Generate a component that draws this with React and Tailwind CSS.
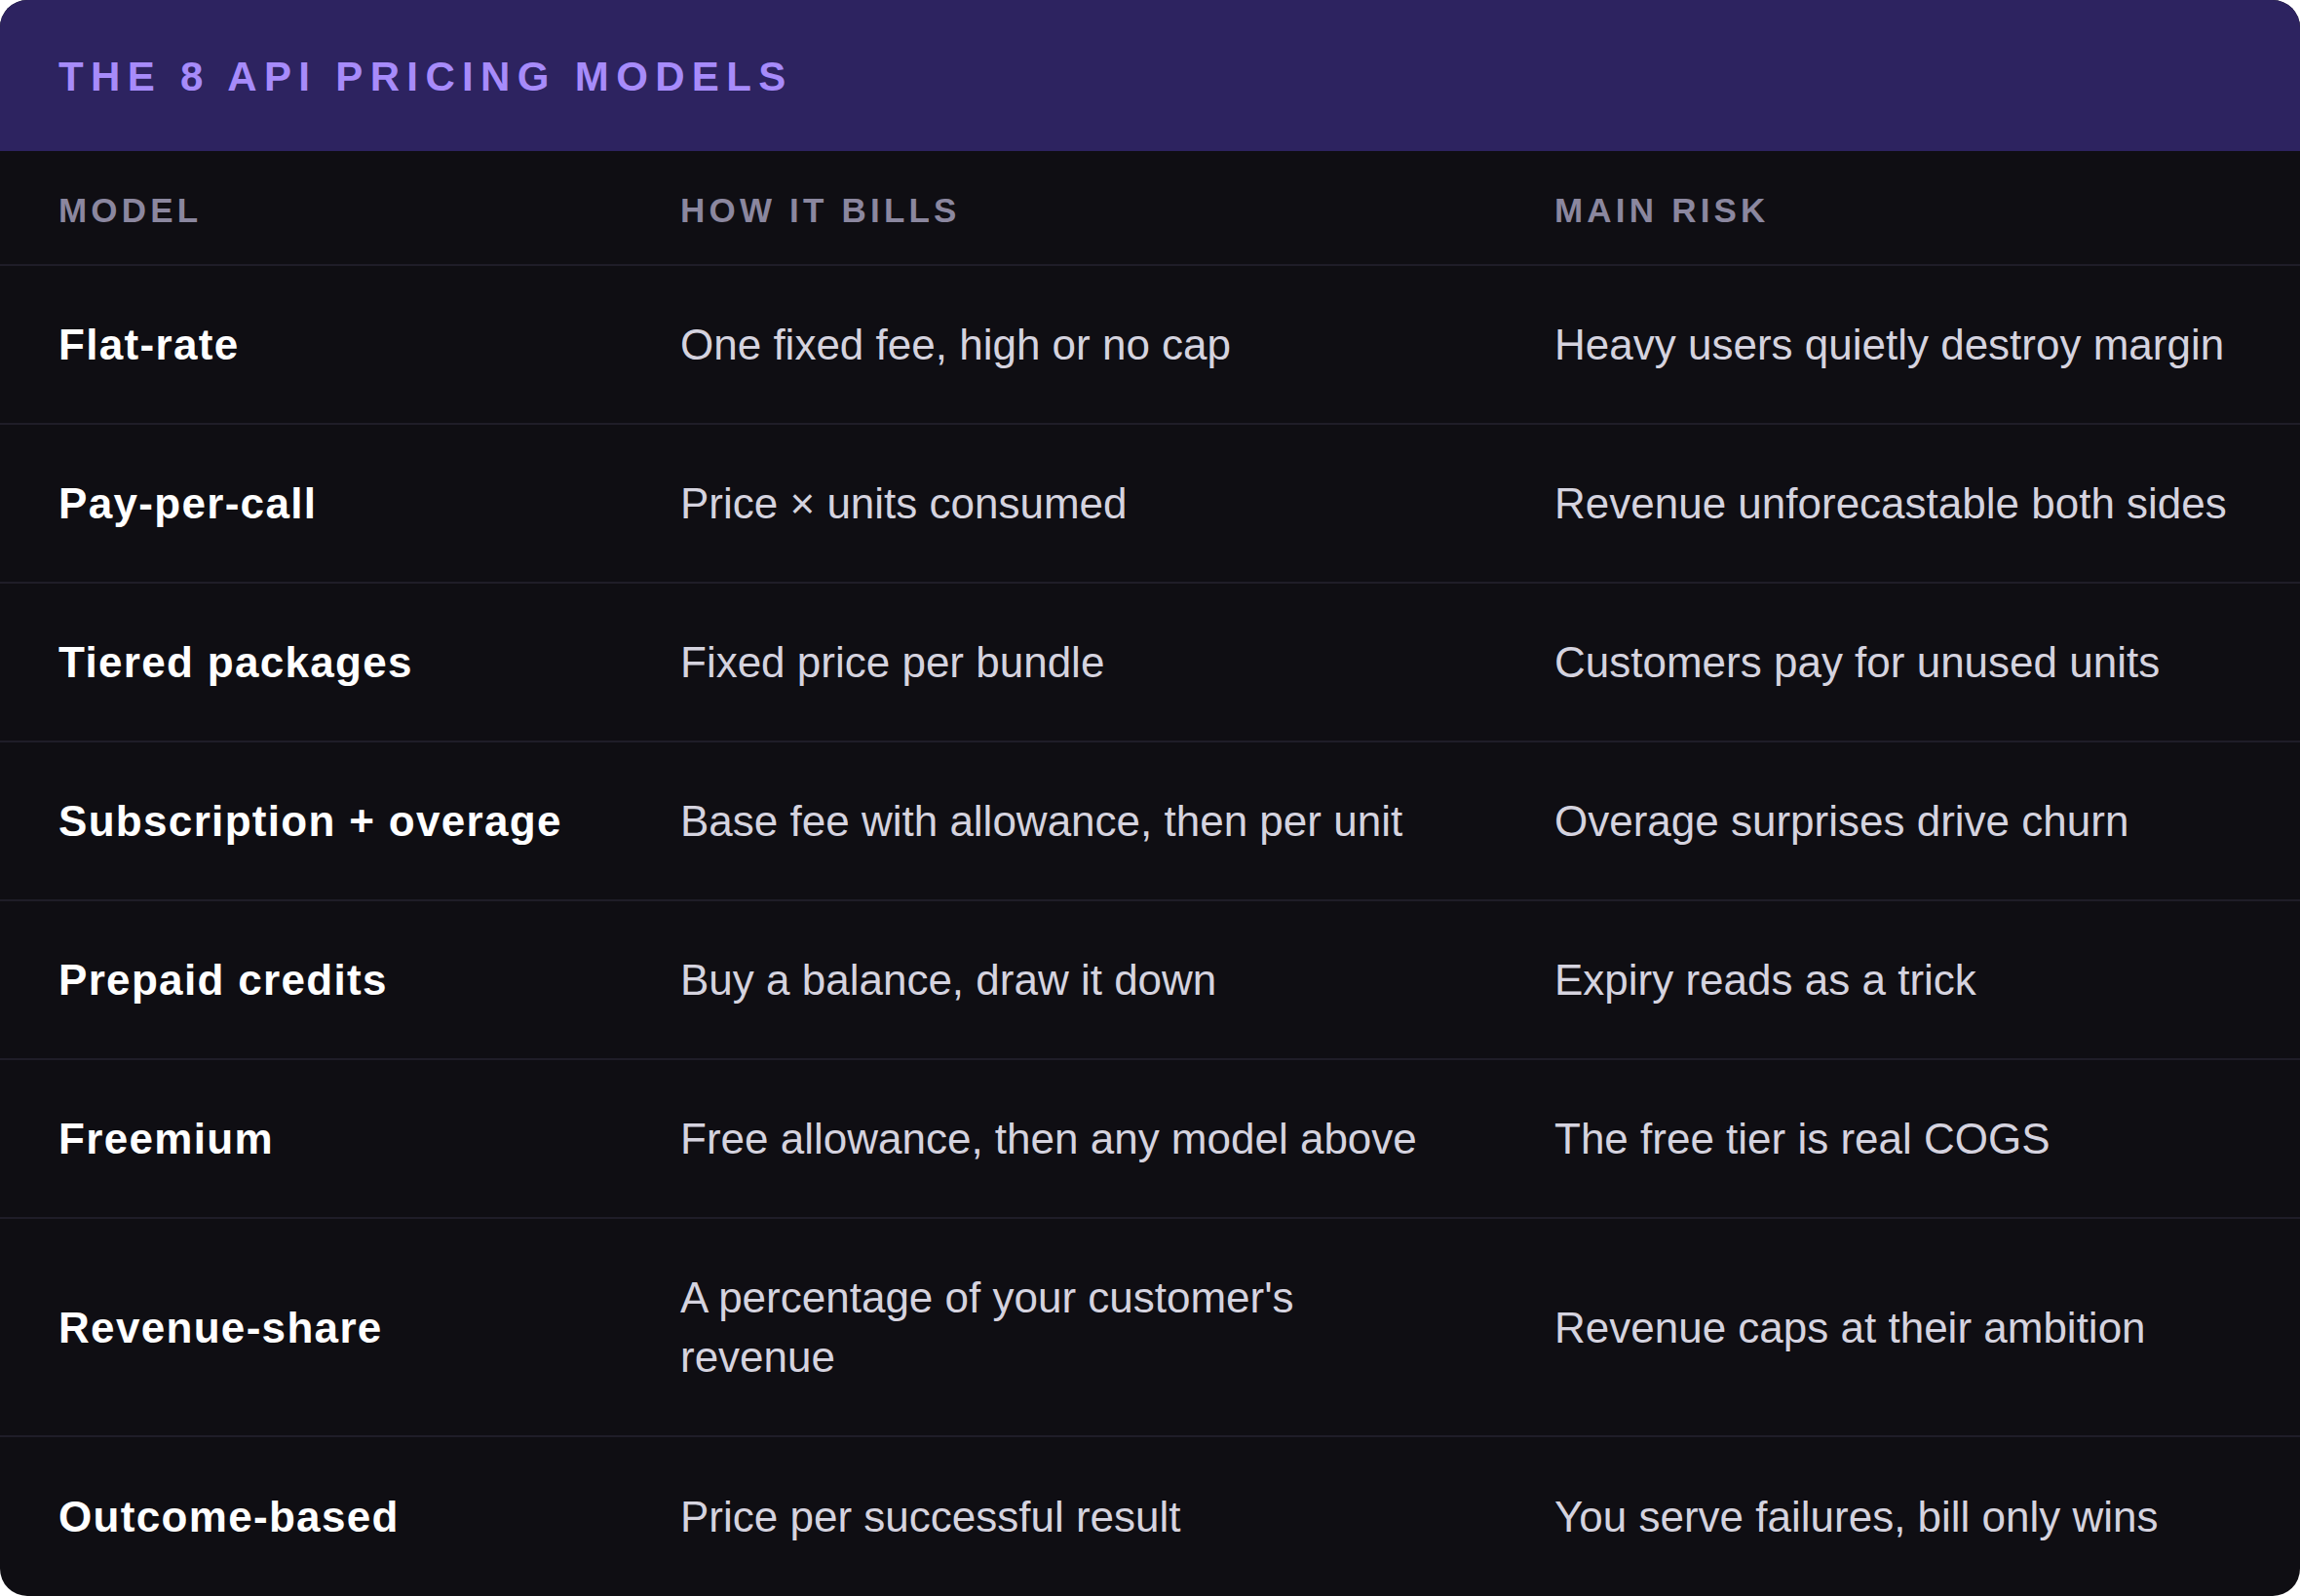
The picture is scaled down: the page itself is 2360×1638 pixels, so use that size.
const rows = [
  ["Flat-rate", "One fixed fee, high or no cap", "Heavy users quietly destroy margin"],
  ["Pay-per-call", "Price × units consumed", "Revenue unforecastable both sides"],
  ["Tiered packages", "Fixed price per bundle", "Customers pay for unused units"],
  ["Subscription + overage", "Base fee with allowance, then per unit", "Overage surprises drive churn"],
  ["Prepaid credits", "Buy a balance, draw it down", "Expiry reads as a trick"],
  ["Freemium", "Free allowance, then any model above", "The free tier is real COGS"],
  ["Revenue-share", "A percentage of your customer's revenue", "Revenue caps at their ambition"],
  ["Outcome-based", "Price per successful result", "You serve failures, bill only wins"],
];

export default function App() {
  return (
    <div
      className="w-[2360px] h-[1638px] bg-white overflow-hidden"
      style={{ fontFamily: '"Liberation Sans", Arial, Helvetica, sans-serif' }}
    >
      <div className="w-full h-full rounded-[28px] overflow-hidden bg-[#0f0e13] flex flex-col">
        <div className="h-[155px] shrink-0 bg-[#2d2360] flex items-center px-[60px] pt-[2px]">
          <h1 className="text-[42px] leading-none font-bold tracking-[0.175em] text-[#a78bfa]">
            THE 8 API PRICING MODELS
          </h1>
        </div>
        <div className="grid grid-cols-[638px_897px_1fr] px-[60px] h-[118px] pt-[4px] shrink-0 items-center border-b-2 border-[#1f1d28] text-[35px] font-bold tracking-[0.12em] text-[#8b879f] leading-none">
          <div>MODEL</div>
          <div>HOW IT BILLS</div>
          <div>MAIN RISK</div>
        </div>
        <div className="flex flex-col flex-1">
          {rows.map((r, i) => (
            <div
              key={i}
              className={
                "grid grid-cols-[638px_897px_1fr] px-[60px] py-[50px] items-center text-[44px] leading-[61px] " +
                (i < rows.length - 1 ? "border-b-2 border-[#1f1d28]" : "flex-1")
              }
            >
              <div className="font-bold text-white tracking-[0.03em]">{r[0]}</div>
              <div className="text-[#d5d3df] max-w-[780px]">{r[1]}</div>
              <div className="text-[#d5d3df]">{r[2]}</div>
            </div>
          ))}
        </div>
      </div>
    </div>
  );
}
